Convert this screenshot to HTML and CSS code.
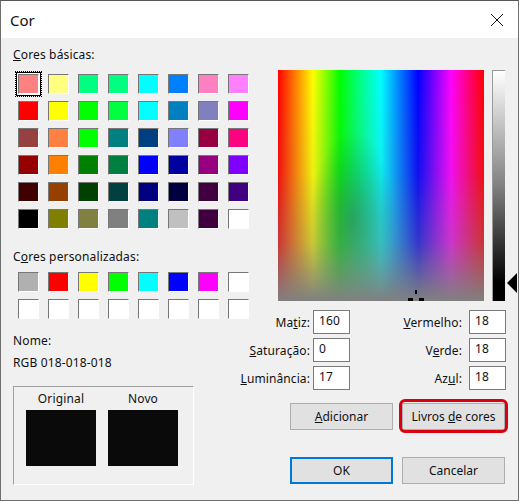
FILE: index.html
```html
<!DOCTYPE html>
<html lang="pt">
<head>
<meta charset="utf-8">
<title>Cor</title>
<link rel="stylesheet" href="styles.css">
</head>
<body>
<div class="dialog">
  <header class="titlebar">
    <span class="title">Cor</span>
    <svg class="close" width="14" height="14" viewBox="0 0 14 14"><path d="M1 1L13 13M13 1L1 13" stroke="#111" stroke-width="1" fill="none"/></svg>
  </header>
  <main class="body">
    <section class="left">
      <div class="label basic-label"><u>C</u>ores básicas:</div>
      <div class="swatches basic">
        <i class="sw selected c-ff8080"></i><i class="sw c-ffff80"></i><i class="sw c-00ff80"></i><i class="sw c-00ff80"></i><i class="sw c-00ffff"></i><i class="sw c-0080ff"></i><i class="sw c-ff80c0"></i><i class="sw c-ff80ff"></i>
        <i class="sw c-ff0000"></i><i class="sw c-ffff00"></i><i class="sw c-00ff00"></i><i class="sw c-00ff40"></i><i class="sw c-00ffff"></i><i class="sw c-0080c0"></i><i class="sw c-8080c0"></i><i class="sw c-ff00ff"></i>
        <i class="sw c-804040"></i><i class="sw c-ff8040"></i><i class="sw c-00ff00"></i><i class="sw c-008080"></i><i class="sw c-004080"></i><i class="sw c-8080ff"></i><i class="sw c-800040"></i><i class="sw c-ff0080"></i>
        <i class="sw c-800000"></i><i class="sw c-ff8000"></i><i class="sw c-008000"></i><i class="sw c-008040"></i><i class="sw c-0000ff"></i><i class="sw c-0000a0"></i><i class="sw c-800080"></i><i class="sw c-8000ff"></i>
        <i class="sw c-400000"></i><i class="sw c-804000"></i><i class="sw c-004000"></i><i class="sw c-004040"></i><i class="sw c-000080"></i><i class="sw c-000040"></i><i class="sw c-400040"></i><i class="sw c-400080"></i>
        <i class="sw c-000000"></i><i class="sw c-808000"></i><i class="sw c-808040"></i><i class="sw c-808080"></i><i class="sw c-008080"></i><i class="sw c-c0c0c0"></i><i class="sw c-400040"></i><i class="sw c-ffffff"></i>
      </div>
      <div class="label custom-label">C<u>o</u>res personalizadas:</div>
      <div class="swatches custom">
        <i class="sw c-b0b0b0"></i><i class="sw c-ff0000"></i><i class="sw c-ffff00"></i><i class="sw c-00ff00"></i><i class="sw c-00ffff"></i><i class="sw c-0000ff"></i><i class="sw c-ff00ff"></i><i class="sw c-ffffff"></i>
        <i class="sw c-ffffff"></i><i class="sw c-ffffff"></i><i class="sw c-ffffff"></i><i class="sw c-ffffff"></i><i class="sw c-ffffff"></i><i class="sw c-ffffff"></i><i class="sw c-ffffff"></i><i class="sw c-ffffff"></i>
      </div>
      <div class="label name-label">Nome:</div>
      <div class="label rgb-label">RGB 018-018-018</div>
      <div class="preview">
        <div class="preview-col"><span class="preview-title">Original</span><div class="preview-box"></div></div>
        <div class="preview-col"><span class="preview-title">Novo</span><div class="preview-box"></div></div>
      </div>
    </section>
    <section class="right">
      <div class="picker">
        <div class="spectrum">
          <svg class="cross" width="20" height="11" viewBox="0 0 20 11"><path d="M9 0h2v4H9zM2 8h5v3H2zM13 8h5v3h-5z" fill="#000"/></svg>
        </div>
        <div class="lum"></div>
        <svg class="arrow" width="10" height="20" viewBox="0 0 10 20"><path d="M10 0V20L0 10Z" fill="#000"/></svg>
      </div>
      <div class="fields">
        <div class="field-col hsl">
          <label class="field"><span>Ma<u>t</u>iz:</span><b class="input">160</b></label>
          <label class="field"><span><u>S</u>aturação:</span><b class="input">0</b></label>
          <label class="field"><span><u>L</u>uminância:</span><b class="input">17</b></label>
        </div>
        <div class="field-col rgb">
          <label class="field"><span><u>V</u>ermelho:</span><b class="input">18</b></label>
          <label class="field"><span>V<u>e</u>rde:</span><b class="input">18</b></label>
          <label class="field"><span>Az<u>u</u>l:</span><b class="input">18</b></label>
        </div>
      </div>
      <div class="buttons row-add">
        <button class="btn"><u>A</u>dicionar</button>
        <button class="btn ringed">Livros <u>d</u>e cores</button>
      </div>
      <div class="buttons row-ok">
        <button class="btn primary">OK</button>
        <button class="btn">Cancelar</button>
      </div>
    </section>
  </main>
</div>
</body>
</html>
```
FILE: styles.css
```css
* { box-sizing: border-box; }
html, body { margin: 0; padding: 0; }
body {
  width: 519px;
  height: 501px;
  overflow: hidden;
  font-family: "Noto Sans", "Open Sans", sans-serif;
  font-size: 12px;
  color: #111;
  background: #f0f0f0;
}
.dialog {
  width: 519px;
  height: 501px;
  display: flex;
  flex-direction: column;
  border: 1px solid #6e6e6e;
  border-top-color: #555;
  background: #f0f0f0;
}
.titlebar {
  height: 37px;
  flex: none;
  background: #fff;
  display: flex;
  align-items: center;
  justify-content: space-between;
  padding: 0 14px 0 9px;
}
.title { font-size: 15px; }
.body {
  flex: 1;
  display: flex;
  min-height: 0;
}
.left {
  width: 277px;
  flex: none;
  padding-left: 12px;
}
.label { line-height: 16px; white-space: nowrap; letter-spacing: .15px; }
.basic-label { margin-top: 9px; }
.swatches {
  display: grid;
  grid-template-columns: repeat(8, 21px);
  column-gap: 9px;
  grid-auto-rows: 20px;
  row-gap: 7px;
  margin-left: 5px;
}
.basic { margin-top: 11px; }
.custom-label { margin-top: 20px; }
.custom { margin-top: 7px; }
.name-label { margin-top: 14px; }
.rgb-label { margin-top: 6px; }
.sw {
  display: block;
  border: 1px solid;
  border-color: #777 #fff #fff #777;
}
.selected {
  box-shadow: 0 0 0 1px #fff, 0 0 0 2px #000;
  outline: 1px dotted #000;
  outline-offset: 2px;
}
.c-ff8080 { background: #ff8080; } .c-ffff80 { background: #ffff80; }
.c-00ff80 { background: #00ff80; } .c-00ffff { background: #00ffff; }
.c-0080ff { background: #0080ff; } .c-ff80c0 { background: #ff80c0; }
.c-ff80ff { background: #ff80ff; } .c-ff0000 { background: #ff0000; }
.c-ffff00 { background: #ffff00; } .c-00ff00 { background: #00ff00; }
.c-00ff40 { background: #00ff40; } .c-0080c0 { background: #0080c0; }
.c-8080c0 { background: #8080c0; } .c-ff00ff { background: #ff00ff; }
.c-804040 { background: #964040; } .c-ff8040 { background: #ff8040; }
.c-008080 { background: #008080; } .c-004080 { background: #004080; }
.c-8080ff { background: #8080ff; } .c-800040 { background: #960040; }
.c-ff0080 { background: #ff0080; } .c-800000 { background: #960000; }
.c-ff8000 { background: #ff8000; } .c-008000 { background: #008000; }
.c-008040 { background: #008040; } .c-0000ff { background: #0000ff; }
.c-0000a0 { background: #0000a0; } .c-800080 { background: #960080; }
.c-8000ff { background: #8000ff; } .c-400000 { background: #400000; }
.c-804000 { background: #964000; } .c-004000 { background: #004000; }
.c-004040 { background: #004040; } .c-000080 { background: #000080; }
.c-000040 { background: #000040; } .c-400040 { background: #400040; }
.c-400080 { background: #400080; } .c-000000 { background: #000000; }
.c-808000 { background: #808000; } .c-808040 { background: #808040; }
.c-808080 { background: #808080; } .c-c0c0c0 { background: #c0c0c0; }
.c-ffffff { background: #ffffff; } .c-b0b0b0 { background: #b0b0b0; }
.preview {
  width: 181px;
  height: 99px;
  margin-top: 15px;
  border: 1px solid;
  border-color: #a0a0a0 #fff #fff #a0a0a0;
  padding: 4px 0 0 12px;
  display: flex;
  gap: 12px;
}
.preview-col { width: 70px; display: flex; flex-direction: column; align-items: center; }
.preview-title { line-height: 16px; letter-spacing: .15px; }
.preview-box { width: 70px; height: 56px; margin-top: 3px; background: #0a0a0a; }
.right { flex: 1; min-width: 0; }
.picker {
  position: relative;
  display: flex;
  margin-top: 32px;
  height: 231px;
}
.spectrum {
  position: relative;
  overflow: hidden;
  width: 206px;
  height: 231px;
  background:
    linear-gradient(to bottom, rgba(128,128,128,0) 0%, rgba(128,128,128,.12) 45%, rgba(128,128,128,.42) 75%, #808080 100%),
    radial-gradient(ellipse 42px 90px at 36% 65%, rgba(0,90,70,.45), rgba(0,90,70,0)),
    linear-gradient(to right, #f00 0%, #ff0 17%, #0f0 30%, #0f8 40%, #0ff 50%, #00f 68%, #f0f 84%, #f00 100%);
}
.cross { position: absolute; left: 128px; bottom: 0; }
.lum {
  width: 13px;
  height: 231px;
  margin-left: 8px;
  border: solid #9a9a9a;
  border-width: 1px 0 0 1px;
  background: linear-gradient(to bottom, #fff 0%, #808080 50%, #000 92%, #000 100%);
}
.arrow { position: absolute; left: 229px; top: 203px; }
.fields {
  display: flex;
  margin-top: 9px;
  margin-left: -39px;
  width: 267px;
  justify-content: space-between;
}
.field-col { display: flex; flex-direction: column; gap: 4px; }
.hsl { width: 111px; }
.field {
  display: flex;
  align-items: center;
  justify-content: flex-end;
  gap: 3px;
  height: 24px;
  white-space: nowrap;
  letter-spacing: .1px;
}
.rgb .field { gap: 7px; }
.input {
  display: block;
  width: 37px;
  height: 24px;
  line-height: 20px;
  padding-left: 5px;
  font-weight: 400;
  background: #fff;
  border: 1px solid #7a7a7a;
}
.buttons {
  display: flex;
  gap: 9px;
  margin-left: 12px;
}
.row-add { margin-top: 13px; }
.row-ok { margin-top: 27px; }
.btn {
  width: 103px;
  height: 27px;
  padding: 0;
  font: inherit;
  color: inherit;
  background: #e1e1e1;
  border: 1px solid #adadad;
}
.primary { border: 2px solid #0078d7; }
.ringed { position: relative; }
.ringed::after {
  content: "";
  position: absolute;
  inset: -5px -4px -4px -4px;
  border: 3px solid #d9000f;
  border-radius: 6px;
}
```
